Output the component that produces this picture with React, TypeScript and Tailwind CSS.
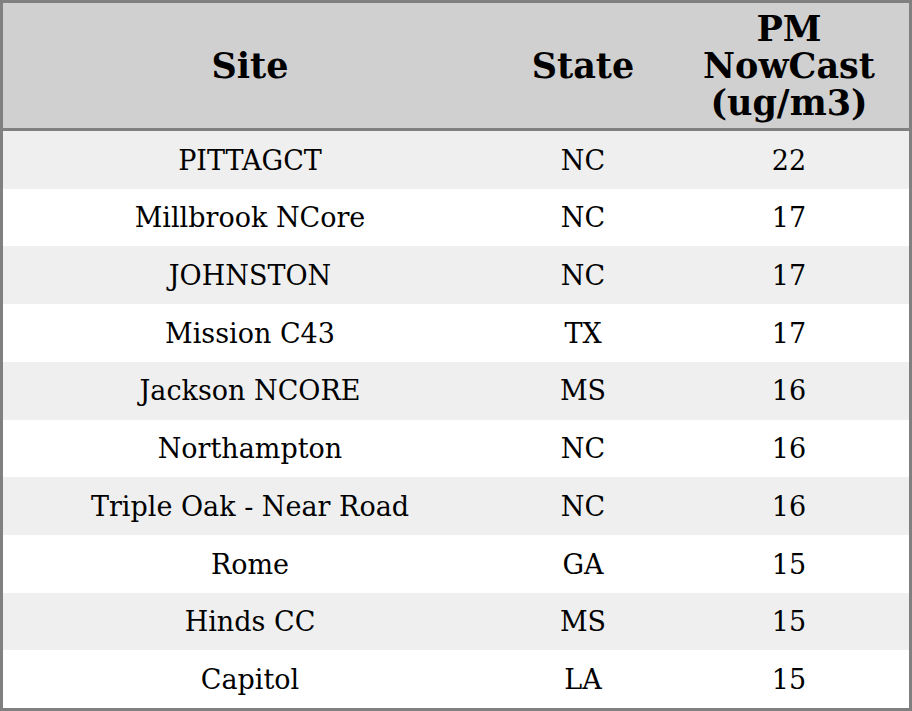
import React from "react";

const rows = [
  { site: "PITTAGCT", state: "NC", pm: 22 },
  { site: "Millbrook NCore", state: "NC", pm: 17 },
  { site: "JOHNSTON", state: "NC", pm: 17 },
  { site: "Mission C43", state: "TX", pm: 17 },
  { site: "Jackson NCORE", state: "MS", pm: 16 },
  { site: "Northampton", state: "NC", pm: 16 },
  { site: "Triple Oak - Near Road", state: "NC", pm: 16 },
  { site: "Rome", state: "GA", pm: 15 },
  { site: "Hinds CC", state: "MS", pm: 15 },
  { site: "Capitol", state: "LA", pm: 15 },
];

const App = () => {
  return (
    <div className="w-[912px] h-[711px] flex flex-col border-[3px] border-[#808080] bg-white text-black font-['DejaVu_Serif',serif]">
      {/* Header */}
      <div className="h-[128px] shrink-0 grid grid-cols-[494px_172px_1fr] items-center bg-[#d0d0d0] border-b-[3px] border-[#808080] text-[35px] font-bold leading-[37px] text-center">
        <div>Site</div>
        <div>State</div>
        <div>
          PM
          <br />
          NowCast
          <br />
          (ug/m3)
        </div>
      </div>

      {/* Rows */}
      <div className="flex-1 flex flex-col">
        {rows.map((r, i) => (
          <div
            key={r.site}
            className={
              "flex-1 grid grid-cols-[494px_172px_1fr] items-center text-center text-[27px] pt-[2px] " +
              (i % 2 === 0 ? "bg-[#efefef]" : "bg-white")
            }
          >
            <div>{r.site}</div>
            <div>{r.state}</div>
            <div>{r.pm}</div>
          </div>
        ))}
      </div>
    </div>
  );
};

export default App;
